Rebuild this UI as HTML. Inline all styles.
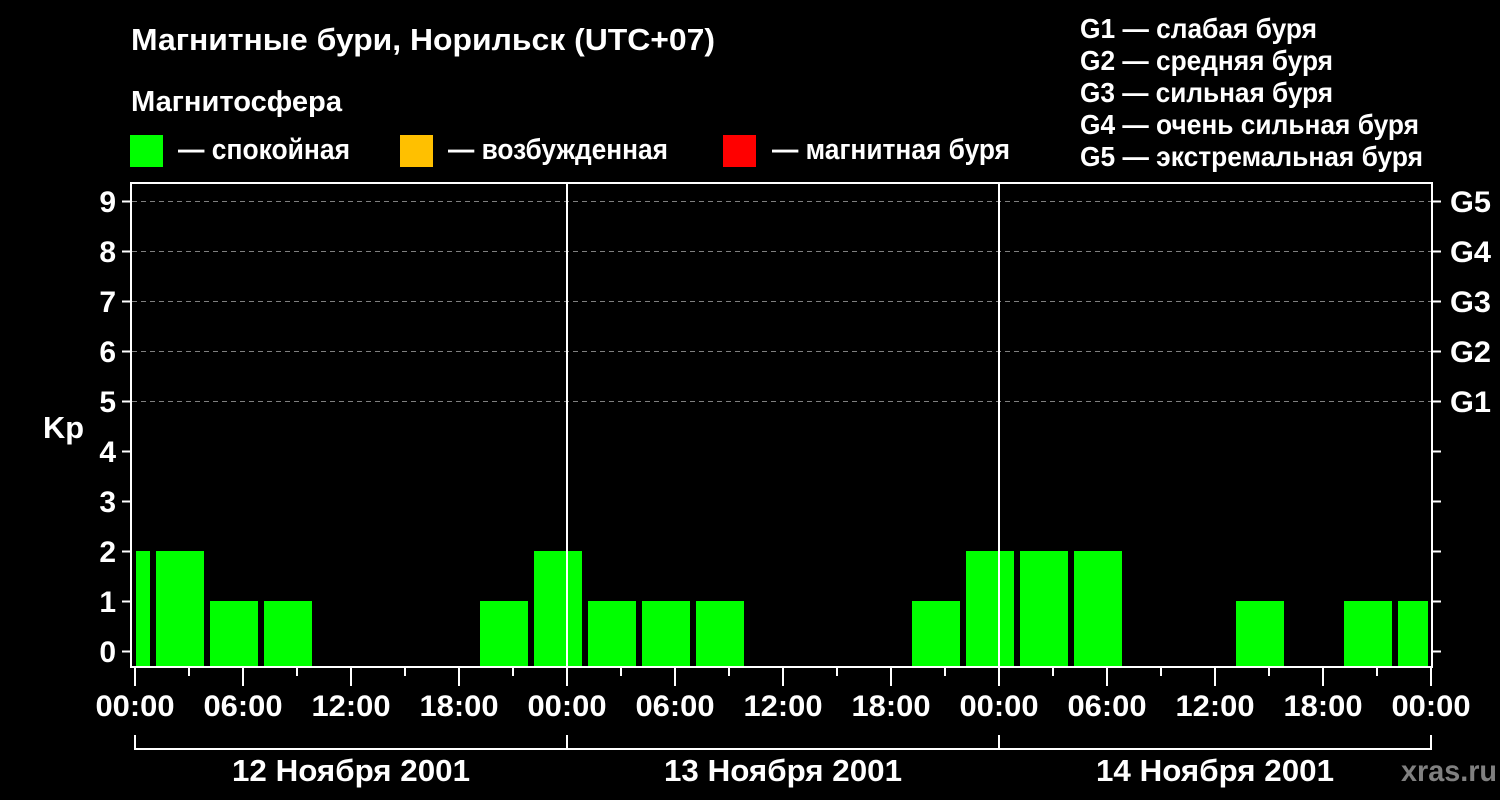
<!DOCTYPE html>
<html><head><meta charset="utf-8"><style>
html,body{margin:0;padding:0;background:#000;width:1500px;height:800px;overflow:hidden}
svg{display:block}
text{font-family:"Liberation Sans",Arial,sans-serif;font-weight:bold;fill:#fff}
</style></head><body>
<svg width="1500" height="800" viewBox="0 0 1500 800" xmlns="http://www.w3.org/2000/svg">
<rect width="1500" height="800" fill="#000"/>
<text x="131" y="50" font-size="31" textLength="584" lengthAdjust="spacingAndGlyphs">Магнитные бури, Норильск (UTC+07)</text>
<text x="131" y="111" font-size="29" textLength="211" lengthAdjust="spacingAndGlyphs">Магнитосфера</text>
<rect x="130" y="135" width="33" height="32" fill="#00ff00"/>
<text x="178" y="159" font-size="29" textLength="172" lengthAdjust="spacingAndGlyphs">— спокойная</text>
<rect x="400" y="135" width="33" height="32" fill="#ffc000"/>
<text x="448" y="159" font-size="29" textLength="220" lengthAdjust="spacingAndGlyphs">— возбужденная</text>
<rect x="723" y="135" width="33" height="32" fill="#ff0000"/>
<text x="772" y="159" font-size="29" textLength="238" lengthAdjust="spacingAndGlyphs">— магнитная буря</text>
<g font-size="28">
<text x="1080" y="38" textLength="237" lengthAdjust="spacingAndGlyphs">G1 — слабая буря</text>
<text x="1080" y="70" textLength="253" lengthAdjust="spacingAndGlyphs">G2 — средняя буря</text>
<text x="1080" y="102" textLength="253" lengthAdjust="spacingAndGlyphs">G3 — сильная буря</text>
<text x="1080" y="134" textLength="339" lengthAdjust="spacingAndGlyphs">G4 — очень сильная буря</text>
<text x="1080" y="166" textLength="343" lengthAdjust="spacingAndGlyphs">G5 — экстремальная буря</text>
</g>
<g stroke="#808080" stroke-width="1" stroke-dasharray="5,4">
<line x1="132" y1="201.5" x2="1432" y2="201.5"/>
<line x1="132" y1="251.5" x2="1432" y2="251.5"/>
<line x1="132" y1="301.5" x2="1432" y2="301.5"/>
<line x1="132" y1="351.5" x2="1432" y2="351.5"/>
<line x1="132" y1="401.5" x2="1432" y2="401.5"/>
</g>
<g fill="#00ff00">
<rect x="136" y="551" width="14" height="116"/>
<rect x="156" y="551" width="48" height="116"/>
<rect x="210" y="601" width="48" height="66"/>
<rect x="264" y="601" width="48" height="66"/>
<rect x="480" y="601" width="48" height="66"/>
<rect x="534" y="551" width="48" height="116"/>
<rect x="588" y="601" width="48" height="66"/>
<rect x="642" y="601" width="48" height="66"/>
<rect x="696" y="601" width="48" height="66"/>
<rect x="912" y="601" width="48" height="66"/>
<rect x="966" y="551" width="48" height="116"/>
<rect x="1020" y="551" width="48" height="116"/>
<rect x="1074" y="551" width="48" height="116"/>
<rect x="1236" y="601" width="48" height="66"/>
<rect x="1344" y="601" width="48" height="66"/>
<rect x="1398" y="601" width="30" height="66"/>
</g>
<g stroke="#fff" stroke-width="2" fill="none">
<rect x="131" y="183" width="1301" height="484"/>
<line x1="567" y1="183" x2="567" y2="667"/>
<line x1="999" y1="183" x2="999" y2="667"/>
<path d="M122 201.5h9M122 251.5h9M122 301.5h9M122 351.5h9M122 401.5h9M122 451.5h9M122 501.5h9M122 551.5h9M122 601.5h9M122 651.5h9"/>
<path d="M1432 201.5h9M1432 251.5h9M1432 301.5h9M1432 351.5h9M1432 401.5h9M1432 451.5h9M1432 501.5h9M1432 551.5h9M1432 601.5h9M1432 651.5h9"/>
<path d="M135 667v19M243 667v19M351 667v19M459 667v19M567 667v19M675 667v19M783 667v19M891 667v19M999 667v19M1107 667v19M1215 667v19M1323 667v19M1431 667v19"/>
<path d="M189 667v9M297 667v9M405 667v9M513 667v9M621 667v9M729 667v9M837 667v9M945 667v9M1053 667v9M1161 667v9M1269 667v9M1377 667v9"/>
<path d="M135 735v14h1296v-14M567 735v14M999 735v14"/>
</g>
<g font-size="30" text-anchor="end">
<text x="116" y="212">9</text><text x="116" y="262">8</text><text x="116" y="312">7</text>
<text x="116" y="362">6</text><text x="116" y="412">5</text><text x="116" y="462">4</text>
<text x="116" y="512">3</text><text x="116" y="562">2</text><text x="116" y="612">1</text>
<text x="116" y="662">0</text>
</g>
<text x="43" y="438" font-size="31" textLength="41" lengthAdjust="spacingAndGlyphs">Kp</text>
<g font-size="30">
<text x="1450" y="212" textLength="41" lengthAdjust="spacingAndGlyphs">G5</text><text x="1450" y="262" textLength="41" lengthAdjust="spacingAndGlyphs">G4</text><text x="1450" y="312" textLength="41" lengthAdjust="spacingAndGlyphs">G3</text>
<text x="1450" y="362" textLength="41" lengthAdjust="spacingAndGlyphs">G2</text><text x="1450" y="412" textLength="41" lengthAdjust="spacingAndGlyphs">G1</text>
</g>
<g font-size="30" text-anchor="middle">
<text x="135" y="716" textLength="79" lengthAdjust="spacingAndGlyphs">00:00</text>
<text x="243" y="716" textLength="79" lengthAdjust="spacingAndGlyphs">06:00</text>
<text x="351" y="716" textLength="79" lengthAdjust="spacingAndGlyphs">12:00</text>
<text x="459" y="716" textLength="79" lengthAdjust="spacingAndGlyphs">18:00</text>
<text x="567" y="716" textLength="79" lengthAdjust="spacingAndGlyphs">00:00</text>
<text x="675" y="716" textLength="79" lengthAdjust="spacingAndGlyphs">06:00</text>
<text x="783" y="716" textLength="79" lengthAdjust="spacingAndGlyphs">12:00</text>
<text x="891" y="716" textLength="79" lengthAdjust="spacingAndGlyphs">18:00</text>
<text x="999" y="716" textLength="79" lengthAdjust="spacingAndGlyphs">00:00</text>
<text x="1107" y="716" textLength="79" lengthAdjust="spacingAndGlyphs">06:00</text>
<text x="1215" y="716" textLength="79" lengthAdjust="spacingAndGlyphs">12:00</text>
<text x="1323" y="716" textLength="79" lengthAdjust="spacingAndGlyphs">18:00</text>
<text x="1431" y="716" textLength="79" lengthAdjust="spacingAndGlyphs">00:00</text>
<text x="351" y="781" font-size="31" textLength="238" lengthAdjust="spacingAndGlyphs">12 Ноября 2001</text>
<text x="783" y="781" font-size="31" textLength="238" lengthAdjust="spacingAndGlyphs">13 Ноября 2001</text>
<text x="1215" y="781" font-size="31" textLength="238" lengthAdjust="spacingAndGlyphs">14 Ноября 2001</text>
</g>
<text x="1401" y="781" font-size="30" style="fill:#808080" textLength="96" lengthAdjust="spacingAndGlyphs">xras.ru</text>
</svg>
</body></html>
